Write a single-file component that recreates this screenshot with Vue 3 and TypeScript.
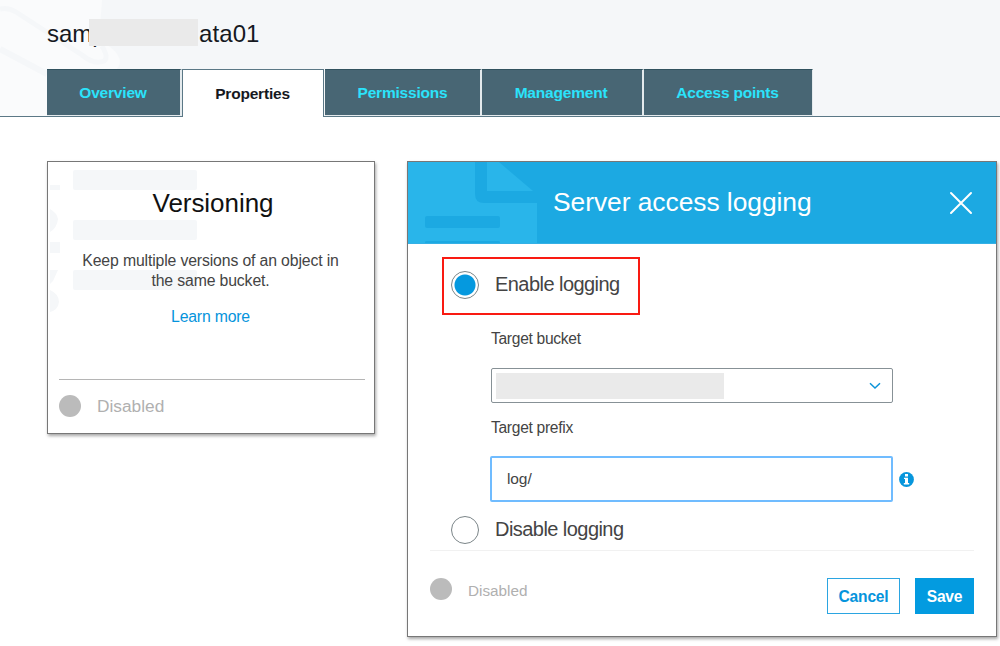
<script setup lang="ts">
import { ref } from 'vue'

interface Tab {
  id: string
  label: string
}

const tabs: Tab[] = [
  { id: 'overview', label: 'Overview' },
  { id: 'properties', label: 'Properties' },
  { id: 'permissions', label: 'Permissions' },
  { id: 'management', label: 'Management' },
  { id: 'access-points', label: 'Access points' },
]
const activeTab = ref('properties')
const mode = ref<'enable' | 'disable'>('enable')
const prefix = ref('log/')
</script>

<template>
  <div class="page">
    <header class="top">
      <svg class="watermark" width="140" height="116" viewBox="0 0 140 116" aria-hidden="true">
        <path d="M0 0H102C101 20 98 32 100 43C106 44 112 47 117 54Q123 62 117 69L117 116H0Z" fill="#fafbfc" />
        <path d="M0 9Q8 7 16 12L82 55Q94 65 104 61Q109 58 102 46" fill="none" stroke="#f5f7f9" stroke-width="5" />
        <path d="M0 49L47 74" fill="none" stroke="#f5f7f9" stroke-width="6" />
      </svg>
      <h1 class="bucket"><span>samp</span><i class="mask"></i><span class="tail">ata01</span></h1>
      <nav class="tabs">
        <button
          v-for="t in tabs"
          :key="t.id"
          :class="['tab', t.id, { active: t.id === activeTab }]"
          @click="activeTab = t.id"
        >{{ t.label }}</button>
      </nav>
    </header>

    <main class="content">
      <section class="card">
        <svg class="card-art" width="150" height="150" viewBox="0 0 150 150" aria-hidden="true">
          <g fill="#f5f7f9">
            <rect x="25" y="8" width="124" height="20" rx="2" />
            <rect x="25" y="58" width="124" height="20" rx="2" />
            <rect x="25" y="108" width="124" height="20" rx="2" />
            <rect x="2" y="23" width="10" height="5" />
            <path d="M2 47Q9 51 10 57Q9 66 2 70Z" />
            <rect x="2" y="80" width="10" height="11" />
            <path d="M2 108H10L5 119L2 122Z" />
            <path d="M2 128Q11 132 11 140Q10 148 2 150Z" />
          </g>
        </svg>
        <div class="card-body">
          <h2>Versioning</h2>
          <p>Keep multiple versions of an object in<br />the same bucket.</p>
          <a class="learn">Learn more</a>
        </div>
        <footer class="card-status"><i class="dot"></i><span>Disabled</span></footer>
      </section>

      <section class="dialog">
        <div class="dialog-head">
          <svg class="doc" width="140" height="81" viewBox="0 0 140 81" aria-hidden="true">
            <path d="M0 0H67V32Q67 41 76 41H129V81H0Z" fill="#29b5ea" />
            <path d="M79 0H91L125 29H79Z" fill="#29b5ea" />
            <rect x="17" y="54" width="75" height="12" rx="2" fill="#1ca9e2" />
            <path d="M17 81V80Q17 79 19 79H90Q92 79 92 80V81Z" fill="#1ca9e2" />
          </svg>
          <h2>Server access logging</h2>
          <button class="close" aria-label="Close">
            <svg width="24" height="24" viewBox="0 0 24 24"><path d="M2 2L22 22M22 2L2 22" stroke="#fff" stroke-width="2" stroke-linecap="round" /></svg>
          </button>
        </div>

        <div class="form">
          <div class="highlight" @click="mode = 'enable'">
            <i :class="['radio', { on: mode === 'enable' }]"></i>
            <span class="radio-label">Enable logging</span>
          </div>
          <div class="fields">
            <label class="target-bucket">Target bucket</label>
            <div class="select">
              <i class="redacted"></i>
              <svg width="12" height="8" viewBox="0 0 12 8"><path d="M1 1.2L6 6L11 1.2" fill="none" stroke="#0a93d8" stroke-width="1.5" /></svg>
            </div>
            <label class="target-prefix">Target prefix</label>
            <div class="prefix-row">
              <input v-model="prefix" />
              <svg width="15" height="15" viewBox="0 0 15 15">
                <circle cx="7.5" cy="7.5" r="7.4" fill="#0796dc" />
                <path d="M6 2H9V4.4H6ZM5 5.8H9V11H10.2V12.6H4.8V11H6V7.1H5Z" fill="#fff" />
              </svg>
            </div>
          </div>
          <div class="disable-row" @click="mode = 'disable'">
            <i :class="['radio', { on: mode === 'disable' }]"></i>
            <span class="radio-label">Disable logging</span>
          </div>
        </div>

        <footer class="dialog-foot">
          <i class="dot"></i>
          <span class="state">Disabled</span>
          <button class="cancel">Cancel</button>
          <button class="save">Save</button>
        </footer>
      </section>
    </main>
  </div>
</template>

<style>
body { margin: 0; background: #fff; overflow: hidden; }
</style>

<style scoped>
* { box-sizing: border-box; }
.page { width: 1000px; height: 646px; overflow: hidden; background: #fff; font-family: "Liberation Sans", Arial, sans-serif; color: #444; }
h1, h2, p { margin: 0; font-weight: 400; }
button { font-family: inherit; padding: 0; border: 0; margin: 0; }
.top { position: relative; height: 117px; background: #f5f7f9; border-bottom: 1px solid #5b7886; padding: 19px 0 0 47px; }
.watermark { position: absolute; left: 0; top: 0; }
.bucket { position: relative; display: flex; height: 27px; font-size: 24px; line-height: 30px; color: #16191f; }
.bucket span:first-child { width: 58px; }
.mask { position: absolute; left: 42px; top: 0; width: 109px; height: 27px; background: #eaeaea; }
.tail { margin-left: 94px; letter-spacing: 0.1px; }
.tabs { position: relative; display: flex; margin-top: 23px; height: 48px; }
.tab { height: 47px; background: #486674; border: solid #e4eaed; border-width: 0 2px 1px 0; border-top: 1px solid #31525f; color: #2be3fb; font-size: 15.5px; letter-spacing: -.2px; font-weight: 700; line-height: 44px; padding-right: 1px; }
.overview { width: 135px; }
.properties { width: 143px; }
.permissions { width: 157px; padding-right: 0; }
.management { width: 162px; padding-right: 2px; }
.access-points { width: 169px; border-right-width: 1px; }
.tab.active { background: #fff; color: #16191f; height: 48px; border: 1px solid #5b7886; border-bottom: 0; width: 142px; margin-right: 1px; line-height: 47px; }
.content { display: flex; align-items: flex-start; padding: 44px 0 0 47px; gap: 32px; }
.card { position: relative; width: 328px; height: 273px; border: 1px solid #777; box-shadow: 1px 2px 3px rgba(0,0,0,.35); text-align: center; padding: 0 9px 0 11px; }
.card-art { position: absolute; left: 0; top: 0; }
.card-body { position: relative; height: 218px; padding-top: 26px; border-bottom: 1px solid #b5b5b5; }
.card-body h2 { font-size: 26px; line-height: 30px; color: #111; padding-left: 2px; letter-spacing: -.05px; }
.card-body p { margin-top: 33px; font-size: 15.8px; letter-spacing: -.14px; line-height: 20px; padding-right: 3px; }
.learn { display: block; margin-top: 17px; font-size: 15.8px; letter-spacing: -.2px; line-height: 18px; color: #0594dc; padding-right: 3px; }
.card-status { display: flex; align-items: center; height: 51px; font-size: 17.3px; color: #b0b0b0; }
.dot { flex: none; width: 22px; height: 22px; border-radius: 50%; background: #bbb; }
.card-status span { margin: 2px 0 0 16px; }
.dialog { width: 590px; height: 476px; border: 1px solid #777; box-shadow: 1px 2px 3px rgba(0,0,0,.35); }
.dialog-head { position: relative; display: flex; height: 82px; background: #1ca9e2; border-bottom: 1px solid #35b0e5; align-items: center; justify-content: space-between; padding: 0 23px 0 145px; }
.doc { position: absolute; left: 0; top: 0; }
.dialog-head h2 { font-size: 26.4px; line-height: 30px; color: #fff; letter-spacing: -.05px; margin-top: -1px; }
.close { width: 24px; height: 24px; background: none; }
.close svg { display: block; }
.form { height: 307px; margin: 0 22px; border-bottom: 1px solid #f1f1f1; padding-top: 13px; }
.highlight { display: flex; align-items: center; width: 198px; height: 58px; margin-left: 12px; border: 2px solid #f91a12; padding: 0 0 2px 7px; }
.radio { flex: none; width: 28px; height: 28px; border: 1px solid #7b8588; border-radius: 50%; background: #fff; }
.radio.on { background: radial-gradient(circle, #0599df 0 10px, #fff 11px); }
.radio-label { font-size: 20px; letter-spacing: -.55px; margin: -2px 0 0 16px; white-space: nowrap; }
.fields { display: flex; flex-direction: column; padding-left: 61px; }
.fields label { font-size: 15.6px; letter-spacing: -.3px; line-height: 18px; }
.target-bucket { margin-top: 15px; }
.select { display: flex; align-items: center; justify-content: space-between; width: 402px; height: 35px; margin-top: 20px; border: 1px solid #879196; border-radius: 2px; padding: 0 11px 0 4px; }
.redacted { width: 228px; height: 26px; background: #eaeaea; }
.target-prefix { margin-top: 16px; }
.prefix-row { display: flex; align-items: center; gap: 6px; margin-top: 19px; margin-left: -1px; }
input { width: 403px; height: 46px; border: 2px solid #70bcff; border-radius: 2px; outline: 0; padding: 0 15px; font: 15.5px "Liberation Sans", Arial, sans-serif; letter-spacing: -.1px; color: #444; }
.disable-row { display: flex; align-items: center; height: 28px; margin: 14px 0 0 21px; }
.dialog-foot { display: flex; align-items: flex-start; padding: 27px 22px 0; }
.state { margin: 4px 0 0 16px; font-size: 15.3px; line-height: 18px; color: #b0b0b0; }
.cancel, .save { height: 36px; font-size: 15.6px; letter-spacing: -.2px; font-weight: 700; padding-top: 2px; }
.cancel { width: 73px; margin-left: auto; border: 1px solid #2ba5e1; background: #fff; color: #0594dc; }
.save { width: 59px; margin-left: 15px; background: #039be0; color: #fff; }
</style>
